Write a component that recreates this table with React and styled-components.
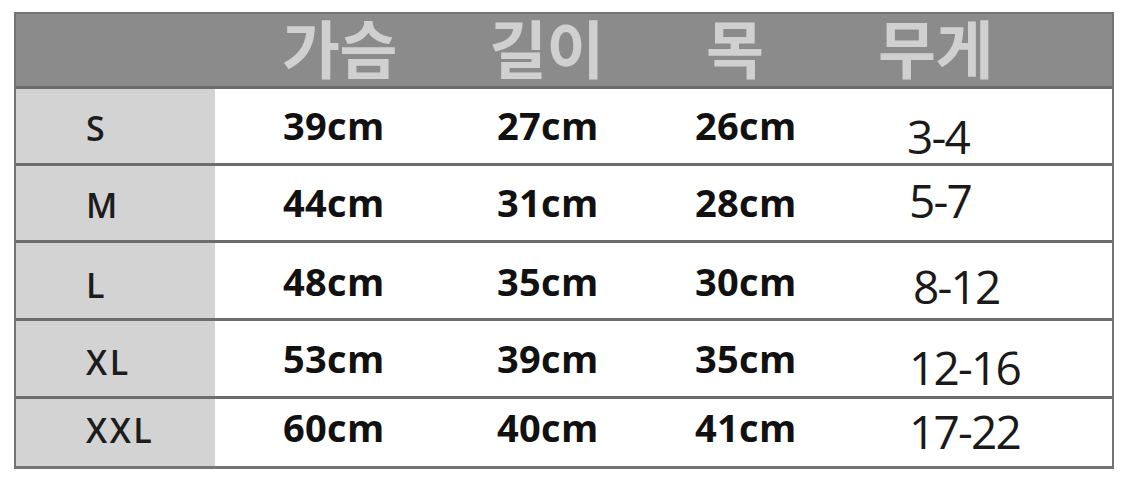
import React from "react";
import styled, { createGlobalStyle } from "styled-components";

const Global = createGlobalStyle`
  html, body { margin: 0; padding: 0; background: #ffffff; }
  body { font-family: "Open Sans", "Noto Sans CJK KR", sans-serif; }
`;

const shift = (p) => `
  padding-top: ${Math.max(0, 2 * (p.$dy || 0))}px;
  padding-bottom: ${Math.max(0, -2 * (p.$dy || 0))}px;
`;

const Page = styled.div`
  padding: 12px 0 0 14px;
  width: 1125px;
  height: 479px;
  box-sizing: border-box;
`;

const Table = styled.div`
  width: 1100px;
  box-sizing: border-box;
  border: 2px solid #747474;
  border-bottom-width: 3px;
  display: flex;
  flex-direction: column;
`;

const cols = "199px 214px 198px 213px 1fr";

const HeaderRow = styled.div`
  display: grid;
  grid-template-columns: ${cols};
  height: 72px;
  background: #8b8b8b;
`;

const HeadCell = styled.div`
  display: flex;
  align-items: center;
  padding-left: ${(p) => p.$pad}px;
  padding-bottom: 12px;
  box-sizing: border-box;
  font-family: "Noto Sans CJK KR", "Noto Sans", sans-serif;
  font-weight: 700;
  font-size: 63px;
  line-height: 1;
  color: #d0d0d0;
  letter-spacing: -0.5px;
  white-space: nowrap;
`;

const Row = styled.div`
  display: grid;
  grid-template-columns: ${cols};
  height: ${(p) => p.$h}px;
  border-top: 3px solid #6c6c6c;
  box-sizing: border-box;
`;

const SizeCell = styled.div`
  background: #d3d3d3;
  display: flex;
  align-items: center;
  padding-left: 70px;
  ${shift}
  box-sizing: border-box;
  font-family: "Open Sans", sans-serif;
  font-size: 34px;
  line-height: 1;
  font-weight: 600;
  letter-spacing: 2.5px;
  color: #1c1c1c;
`;

const ValueCell = styled.div`
  display: flex;
  align-items: center;
  padding-left: 68px;
  ${shift}
  box-sizing: border-box;
  font-family: "Open Sans", sans-serif;
  font-weight: 700;
  font-size: 38px;
  line-height: 1;
  letter-spacing: 0.3px;
  color: #111;
`;

const WeightCell = styled.div`
  display: flex;
  align-items: center;
  padding-left: ${(p) => p.$x}px;
  ${shift}
  box-sizing: border-box;
  font-family: "Open Sans", sans-serif;
  font-weight: 400;
  font-size: 46px;
  line-height: 1;
  letter-spacing: -1.8px;
  color: #1a1a1a;
`;

const headers = [
  { t: "가슴", pad: 67 },
  { t: "길이", pad: 60 },
  { t: "목", pad: 79 },
  { t: "무게", pad: 38 },
];

const rows = [
  { s: "S", v: ["39cm", "27cm", "26cm"], w: "3-4", h: 77, sdy: 2, vdy: -1, wdy: 10, wx: 67 },
  { s: "M", v: ["44cm", "31cm", "28cm"], w: "5-7", h: 77, sdy: 1.5, vdy: -1, wdy: -3.5, wx: 69 },
  { s: "L", v: ["48cm", "35cm", "30cm"], w: "8-12", h: 78, sdy: 4, vdy: 0, wdy: 5, wx: 73 },
  { s: "XL", v: ["53cm", "39cm", "35cm"], w: "12-16", h: 78, sdy: 3, vdy: -0.5, wdy: 8.5, wx: 69 },
  { s: "XXL", v: ["60cm", "40cm", "41cm"], w: "17-22", h: 70, sdy: -3, vdy: -6, wdy: -1.5, wx: 69 },
];

export default function App() {
  return (
    <>
      <Global />
      <Page>
        <Table>
          <HeaderRow>
            <div />
            {headers.map((h) => (
              <HeadCell key={h.t} $pad={h.pad}>
                {h.t}
              </HeadCell>
            ))}
          </HeaderRow>
          {rows.map((r) => (
            <Row key={r.s} $h={r.h}>
              <SizeCell $dy={r.sdy}>{r.s}</SizeCell>
              {r.v.map((v, i) => (
                <ValueCell key={i} $dy={r.vdy}>
                  {v}
                </ValueCell>
              ))}
              <WeightCell $x={r.wx} $dy={r.wdy}>
                {r.w}
              </WeightCell>
            </Row>
          ))}
        </Table>
      </Page>
    </>
  );
}
